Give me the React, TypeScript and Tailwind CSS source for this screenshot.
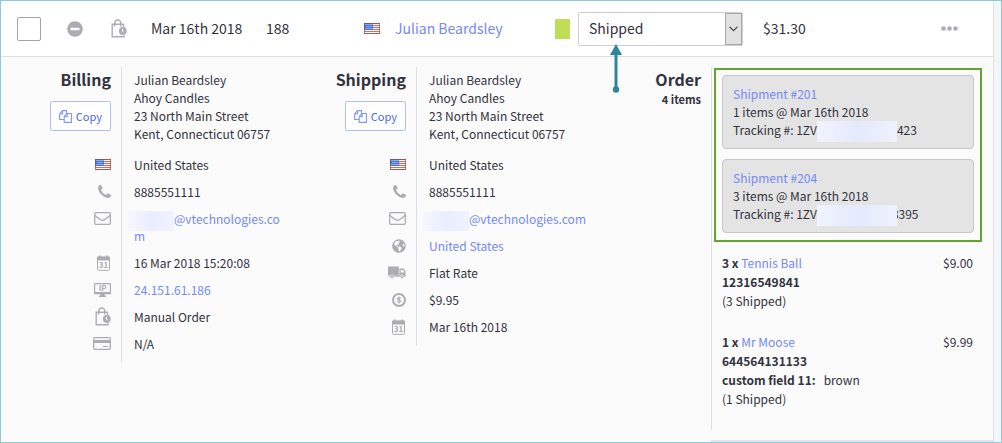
import { useState } from 'react'
import type { ReactNode } from 'react'
import { FaGlobeAmericas, FaMinusCircle } from 'react-icons/fa'

type InfoRow = {
  icon: ReactNode
  content: ReactNode
}

type Item = {
  qty: number
  name: string
  sku: string
  price: string
  custom?: { label: string; value: string }
}

const address = [
  'Julian Beardsley',
  'Ahoy Candles',
  '23 North Main Street',
  'Kent, Connecticut 06757',
]

const shipments = [
  { id: 201, items: 1, date: 'Mar 16th 2018', start: '1ZV', end: '423', overlap: false },
  { id: 204, items: 3, date: 'Mar 16th 2018', start: '1ZV', end: '3395', overlap: true },
]

const items: Item[] = [
  { qty: 3, name: 'Tennis Ball', sku: '12316549841', price: '$9.00' },
  {
    qty: 1,
    name: 'Mr Moose',
    sku: '644564131133',
    price: '$9.99',
    custom: { label: 'custom field 11:', value: 'brown' },
  },
]

function Flag() {
  return (
    <svg width="16" height="11" viewBox="0 0 16 11" role="img" aria-label="United States">
      <rect width="16" height="11" fill="#fff" />
      <path d="M0 .5h16M0 2.5h16M0 4.5h16M0 6.5h16M0 8.5h16M0 10.5h16" stroke="#f0604f" />
      <rect width="9" height="7" fill="#3f74d8" />
      <path d="M1.5 1.5h7M2.5 3.5h6M1.5 5.5h7" stroke="#dbe7ff" strokeDasharray="1 1" />
      <rect x=".5" y=".5" width="15" height="10" fill="none" stroke="#8a4a4a" strokeOpacity=".65" />
    </svg>
  )
}

function Bag() {
  return (
    <svg width="16" height="19" viewBox="0 0 16 19" fill="none" stroke="currentColor">
      <path d="M12.500 8V5.200H1.200v12.600h11.800v-1.500" strokeWidth="1.400" />
      <path d="M3.800 7.500V4a3 3 0 0 1 6 0v3.500" strokeWidth="1.400" />
      <circle cx="11.800" cy="12" r="3.900" fill="currentColor" stroke="none" />
      <path d="M11.400 9.800v2.400l1.600 1" stroke="#fbfbfb" />
    </svg>
  )
}

function Phone() {
  return (
    <svg width="13" height="13" viewBox="0 0 1408 1408" fill="currentColor">
      <path d="M1408 1112q0 27-10 70.5t-21 68.5q-21 50-122 106-94 51-186 51-27 0-52.5-3.5t-57.5-12.5-47.5-14.5-55.5-20.5-49-18q-98-35-175-83-128-79-264.500-215.500t-215.500-264.500q-48-77-83-175-3-9-18-49t-20.500-55.500-14.500-47.500-12.500-57.500-3.500-52.500q0-92 51-186 56-101 106-122 25-11 68.500-21t70.500-10q14 0 21 3 18 6 53 76 11 19 30 54t35 63.500 31 53.500q3 4 17.500 25t21.500 35.500 7 28.500q0 20-28.500 50t-62 55-62 53-28.500 46q0 9 5 22.500t8.500 20.500 14 24 11.500 19q76 137 174 235t235 174q2 1 19 11.500t24 14 20.500 8.500 22.500 5q18 0 46-28.500t53-62 55-62 50-28.500q14 0 28.500 7t35.500 21.500 25 17.500q25 15 53.500 31t63.500 35 54 30q70 35 76 53 3 7 3 21z" />
    </svg>
  )
}

function Envelope() {
  return (
    <svg width="17" height="13" viewBox="0 0 17 13" fill="none" stroke="currentColor" strokeWidth="1.3">
      <rect x=".7" y=".7" width="15.600" height="11.600" rx="1" />
      <path d="M.8 3.200C4 6 6.800 8.400 8.500 8.400S13 6 16.200 3.200" />
    </svg>
  )
}

function Calendar() {
  return (
    <svg width="15" height="16" viewBox="0 0 15 16">
      <rect x="1.500" y="2" width="12" height="13.300" rx="1" fill="none" stroke="currentColor" />
      <path d="M1 5.600V1.800h1.800V.5h2v1.300h5.400V.5h2v1.300H14v3.800z" fill="currentColor" />
      <text x="7.500" y="13.300" fontSize="8" fontWeight="700" textAnchor="middle" fill="currentColor">31</text>
    </svg>
  )
}

function Monitor() {
  return (
    <svg width="17" height="14" viewBox="0 0 17 14">
      <rect x=".6" y=".6" width="15.800" height="9.800" rx=".6" fill="none" stroke="currentColor" strokeWidth="1.200" />
      <path d="M0 9h17v2.200H10.500v1.300H12V14H5v-1.500h1.500v-1.300H0z" fill="currentColor" />
      <text x="8.700" y="8" fontSize="8" fontWeight="700" textAnchor="middle" fill="currentColor">IP</text>
    </svg>
  )
}

function Card() {
  return (
    <svg width="18" height="13" viewBox="0 0 18 13">
      <rect x=".7" y=".7" width="16.600" height="11.600" rx="1.200" fill="none" stroke="currentColor" strokeWidth="1.300" />
      <path d="M1 3h16v3H1z" fill="currentColor" />
      <path d="M10 9.500h5" stroke="currentColor" />
    </svg>
  )
}

function Truck() {
  return (
    <svg width="18" height="13" viewBox="0 0 18 13" fill="currentColor">
      <path d="M0 .5h10.800v9H0z" />
      <path fillRule="evenodd" d="M11.400 2.500h3.800L17.500 5v5.500h-6.100zM12.700 3.900v2.500h3.500V5.600l-1.500-1.700z" />
      <path d="M1 9.500h16.500v1.200H1z" />
      <circle cx="4" cy="10.700" r="1.900" stroke="#fbfbfb" strokeWidth=".6" />
      <circle cx="14" cy="10.700" r="1.900" stroke="#fbfbfb" strokeWidth=".6" />
      <circle cx="4" cy="10.700" r=".6" fill="#fbfbfb" />
      <circle cx="14" cy="10.700" r=".6" fill="#fbfbfb" />
    </svg>
  )
}

function Coin() {
  return (
    <svg width="14" height="14" viewBox="0 0 14 14" fill="none" stroke="currentColor">
      <circle cx="7" cy="7" r="6" strokeWidth="2" />
      <path d="M8.700 5.400C8.200 4.700 5.400 4.500 5.400 5.900c0 1.300 3.300.8 3.300 2.200 0 1.300-2.800 1.300-3.400.4M7 3.500v7" strokeWidth="1.100" />
    </svg>
  )
}

function CopyIcon() {
  return (
    <svg width="13" height="13" viewBox="0 0 13 13" fill="none" stroke="currentColor" strokeWidth="1.1" strokeLinejoin="round">
      <path d="M5 9.500H.6V4L3.500.6h4V3.500" />
      <path d="M3.500.8V4H.8" />
      <path d="M8.200 3.500h4.200v8.900H5.200V6.500z" />
      <path d="M8.200 3.700v3H5.400" />
    </svg>
  )
}

function Column({ title, rows }: { title: string; rows: InfoRow[] }) {
  return (
    <section>
      <div className="flex">
        <div className="w-[120px] shrink-0 pr-2.5 text-right">
          <h2 className="text-[16px] leading-6 font-bold">{title}</h2>
          <button className="mt-2.5 inline-flex h-[30px] items-center gap-1 rounded-xs border border-[#afc0fb] bg-white px-2 text-[11px] text-[#4c68f2]">
            <span className="text-[#8196f9]">
              <CopyIcon />
            </span>
            Copy
          </button>
        </div>
        <address className="flex-1 border-l border-[#dfdfe8] pt-1 pb-2 pl-3 leading-[18px] not-italic">
          {address.map((line) => (
            <div key={line}>{line}</div>
          ))}
        </address>
      </div>
      {rows.map((row, i) => (
        <div key={i} className="flex">
          <div className="flex w-[120px] shrink-0 justify-end pt-[5px] pr-2.5 text-[#adacb3]">
            <div className="flex h-[17px] items-center">{row.icon}</div>
          </div>
          <div className="min-w-0 flex-1 border-l border-[#dfdfe8] py-[5px] pl-3 leading-[17px]">
            {row.content}
          </div>
        </div>
      ))}
      <div className="ml-[120px] h-1.5 border-l border-[#dfdfe8]" />
    </section>
  )
}

function HiddenName() {
  return (
    <span className="-my-1 -ml-1.5 inline-block h-5 w-[46px] bg-linear-to-r from-[#f6f8ff] via-[#e9edfe] to-[#f0f3ff] align-middle" />
  )
}

function Email({ wrap }: { wrap?: boolean }) {
  return (
    <a href="#email" className={wrap ? 'block pr-3 break-all text-[#748af8]' : 'block whitespace-nowrap text-[#748af8]'}>
      <HiddenName />
      @vtechnologies.com
    </a>
  )
}

const billingRows: InfoRow[] = [
  { icon: <Flag />, content: 'United States' },
  { icon: <Phone />, content: '8885551111' },
  { icon: <Envelope />, content: <Email wrap /> },
  { icon: <Calendar />, content: '16 Mar 2018 15:20:08' },
  { icon: <Monitor />, content: <a href="#ip" className="text-[#748af8]">24.151.61.186</a> },
  { icon: <Bag />, content: 'Manual Order' },
  { icon: <Card />, content: 'N/A' },
]

const shippingRows: InfoRow[] = [
  { icon: <Flag />, content: 'United States' },
  { icon: <Phone />, content: '8885551111' },
  { icon: <Envelope />, content: <Email /> },
  { icon: <FaGlobeAmericas size={14} />, content: <a href="#zone" className="text-[#748af8]">United States</a> },
  { icon: <Truck />, content: 'Flat Rate' },
  { icon: <Coin />, content: '$9.95' },
  { icon: <Calendar />, content: 'Mar 16th 2018' },
]

export default function App() {
  const [selected, setSelected] = useState(false)
  const [status, setStatus] = useState('Shipped')

  return (
    <div className="flex border border-[#8ccbd8] bg-[#f4f5f8] font-['Noto_Sans_CJK_SC',sans-serif] text-[12px] text-[#32323e]">
      <main className="min-w-0 flex-1 border-r border-[#dfdfe8] bg-[#fbfbfb]">
        <div className="grid h-14 grid-cols-[50px_44px_40px_115fr_98fr_31px_160fr_23px_185px_178fr_17px] items-center border-b border-[#dfdfe8] bg-white pr-[35px] pl-4 text-[14px]">
          <input
            type="checkbox"
            aria-label="Select order 188"
            checked={selected}
            onChange={(e) => setSelected(e.target.checked)}
            className="size-6 appearance-none rounded-xs border border-[#a3a3b0] bg-white checked:bg-[#748af8]"
          />
          <button aria-label="Collapse order" className="w-4 text-[#adacb3]">
            <FaMinusCircle size={16} />
          </button>
          <span className="text-[#adacb3]">
            <Bag />
          </span>
          <span>Mar 16th 2018</span>
          <span>188</span>
          <Flag />
          <a href="#customer" className="text-[#748af8]">Julian Beardsley</a>
          <span className="h-5 w-[15px] bg-[#bfde58]" />
          <div className="relative w-[165px]">
            <select
              aria-label="Order status"
              value={status}
              onChange={(e) => setStatus(e.target.value)}
              className="block h-[34px] w-full appearance-none rounded-xs border border-[#cfcfd2] bg-white pl-2.5"
            >
              <option>Pending</option>
              <option>Shipped</option>
              <option>Completed</option>
            </select>
            <span className="pointer-events-none absolute inset-y-px right-px flex w-[17px] items-center justify-center border border-[#a9a9a9] bg-[#e1e1e1] text-[#505050]">
              <svg width="9" height="6" viewBox="0 0 9 6" fill="none" stroke="currentColor" strokeWidth="1.3">
                <path d="M.6.8 4.500 4.700 8.400.8" />
              </svg>
            </span>
            <svg className="absolute top-8 left-8" width="12" height="49" viewBox="0 0 12 49" fill="#2f859a">
              <path d="M6 0l6 11H0z" />
              <path d="M4.500 10h3v36h-3z" />
              <circle cx="6" cy="45.500" r="3.200" />
            </svg>
          </div>
          <span>$31.30</span>
          <button aria-label="More actions" className="text-[#adacb3]">
            <svg width="17" height="5" viewBox="0 0 17 5" fill="currentColor">
              <circle cx="2.500" cy="2.500" r="2.300" />
              <circle cx="8.500" cy="2.500" r="2.300" />
              <circle cx="14.500" cy="2.500" r="2.300" />
            </svg>
          </button>
        </div>

        <div className="grid grid-cols-[295fr_295fr_402fr] items-start pt-2.5">
          <Column title="Billing" rows={billingRows} />
          <Column title="Shipping" rows={shippingRows} />

          <section className="flex">
            <div className="w-[120px] shrink-0 pr-2.5 text-right">
              <h2 className="text-[16px] leading-6 font-bold">Order</h2>
              <p className="text-[11px] leading-4 font-bold">4 items</p>
            </div>
            <div className="min-w-0 flex-1">
              <div className="border-l border-[#dfdfe8] pt-px">
                <div className="mr-[11px] ml-0.5 flex flex-col gap-2.5 border-2 border-[#63a52a] px-1.5 pt-[5px] pb-[7px]">
                  {shipments.map((s) => (
                    <div key={s.id} className="rounded border border-[#c8c8c8] bg-[#e4e4e4] px-2.5 py-[9px] leading-[18px]">
                      <a href="#shipment" className="text-[#748af8]">Shipment #{s.id}</a>
                      <div>{s.items} items @ {s.date}</div>
                      <div>
                        Tracking #: {s.start}
                        <span
                          className={`relative -my-1 inline-block h-[21px] w-20 bg-linear-to-r from-[#f1f4fc] via-[#e4e9fd] to-[#eff2fc] align-middle ${s.overlap ? '-mr-[5px]' : ''}`}
                        />
                        {s.end}
                      </div>
                    </div>
                  ))}
                </div>
                <div className="pt-[11px] pr-5 pl-2.5 leading-[19px]">
                  {items.map((item) => (
                    <div key={item.sku} className="pb-[22px]">
                      <div className="flex justify-between">
                        <span>
                          <b>{item.qty} x</b> <a href="#product" className="text-[#748af8]">{item.name}</a>
                        </span>
                        <span>{item.price}</span>
                      </div>
                      <div className="font-bold">{item.sku}</div>
                      {item.custom && (
                        <div className="flex gap-2">
                          <b>{item.custom.label}</b>
                          <span>{item.custom.value}</span>
                        </div>
                      )}
                      <div>({item.qty} Shipped)</div>
                    </div>
                  ))}
                </div>
              </div>
              <div className="mt-2.5 h-0.5 bg-[#dfe5eb]" />
            </div>
          </section>
        </div>
      </main>
      <div className="w-[7px] shrink-0" />
    </div>
  )
}
